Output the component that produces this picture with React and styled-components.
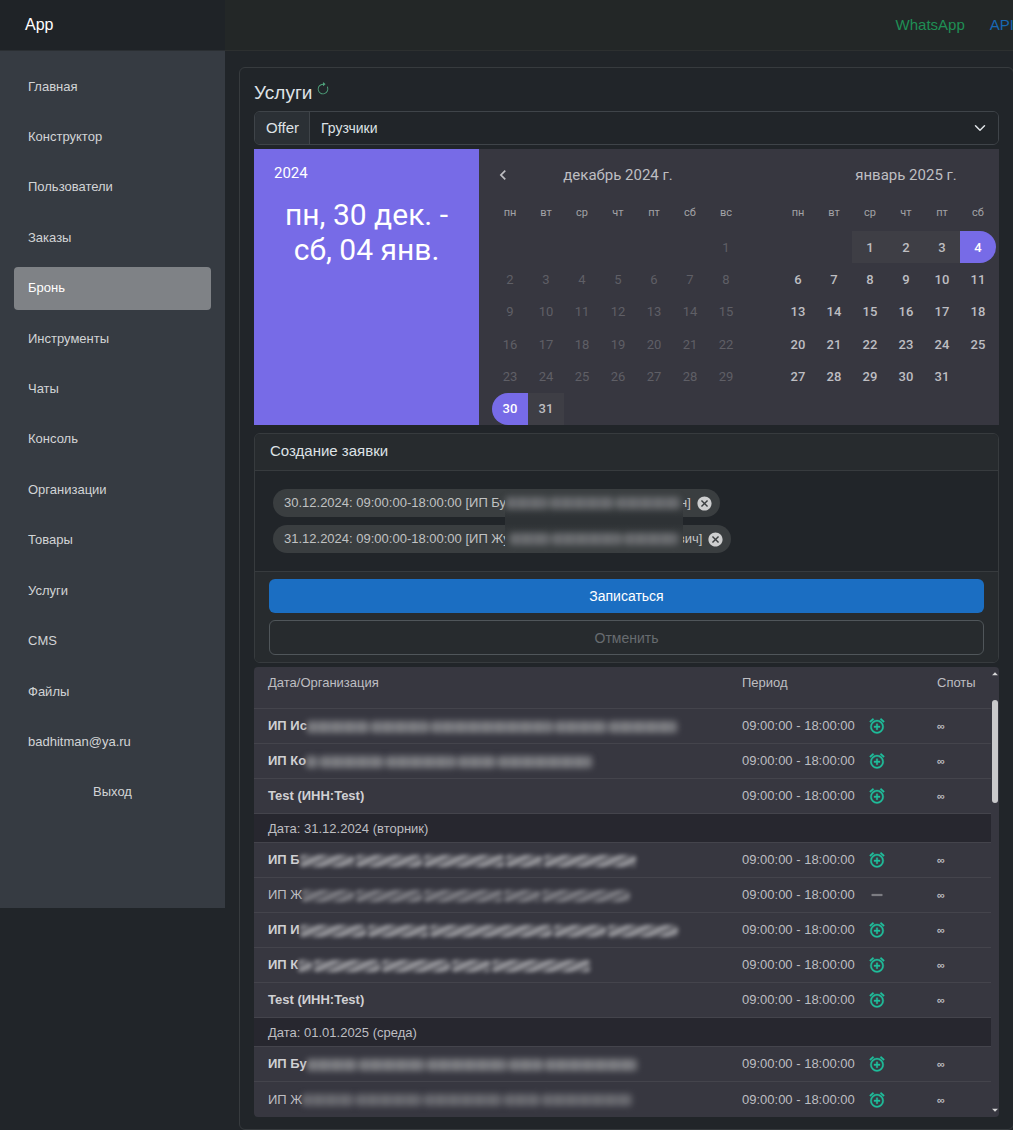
import React from "react";
import styled, { createGlobalStyle, css } from "styled-components";
import { MdOutlineAlarmAdd, MdRemove, MdCancel, MdChevronLeft, MdArrowDropUp, MdArrowDropDown } from "react-icons/md";
import { BsArrowClockwise } from "react-icons/bs";

const color = {
  page: "#212529",
  line: "#373b3e",
  surface: "#373740",
  surfaceLine: "#44444c",
  group: "#27272f",
  primary: "#776be7",
  text: "#dee2e6",
  muted: "#bebec2",
};

const GlobalStyle = createGlobalStyle`
  *, *::before, *::after { box-sizing: border-box; }
  body {
    margin: 0;
    background: ${color.page};
    color: ${color.text};
    font: 15px/22px "Liberation Sans", Arial, sans-serif;
  }
  button, select { font: inherit; color: inherit; }
`;

/* ---------- shell ---------- */

const Shell = styled.div`
  display: flex;
  align-items: flex-start;
  min-height: 100vh;
  overflow: hidden;
`;

const Sidebar = styled.aside`
  flex: 0 0 225px;
  background: #363b42;
`;

const Brand = styled.a`
  display: flex;
  align-items: center;
  height: 51px;
  padding: 0 25px;
  background: #1f2327;
  border-bottom: 1px solid #2b2f33;
  color: #fff;
  font-size: 16px;
  text-decoration: none;
`;

const NavList = styled.ul`
  display: flex;
  flex-direction: column;
  justify-content: space-between;
  min-height: 857px;
  margin: 0;
  padding: 14px 14px 94px;
  list-style: none;
`;

const navItem = css`
  display: flex;
  align-items: center;
  width: 100%;
  height: 43px;
  padding: 0 14px;
  border: 0;
  border-radius: 4px;
  background: none;
  color: #d2d4d6;
  font-size: 13px;
  text-decoration: none;
`;

const NavLink = styled.a`
  ${navItem}
  ${(p) => p.$active && css`
    background: #7f8286;
    color: #fff;
  `}
`;

const NavButton = styled.button`
  ${navItem}
  justify-content: center;
`;

const Main = styled.main`
  flex: 1;
  min-width: 0;
  margin-right: -1px;
`;

const TopBar = styled.header`
  display: flex;
  justify-content: flex-end;
  align-items: center;
  gap: 25px;
  height: 51px;
  background: #232727;
  border-bottom: 1px solid #2d3030;
`;

const TopLink = styled.a`
  color: ${(p) => p.$color};
  text-decoration: none;
`;

const ServiceCard = styled.section`
  display: flex;
  flex-direction: column;
  gap: 4px;
  margin: 16px 0 0 14px;
  padding: 14px 14px 12px;
  border: 1px solid ${color.line};
  border-radius: 6px;
`;

const TitleRow = styled.div`
  display: flex;
  align-items: flex-start;
  gap: 4px;
  height: 25px;
`;

const Title = styled.h1`
  margin: 0;
  font-size: 19px;
  font-weight: 400;
  line-height: 22px;
`;

const RefreshButton = styled.button`
  display: flex;
  padding: 0;
  border: 0;
  background: none;
  color: #4fa37c;
  font-size: 14px;
  line-height: 14px;
  svg { display: block; }
`;

/* ---------- offer picker ---------- */

const OfferGroup = styled.div`
  display: flex;
  height: 34px;
  border: 1px solid #3f4449;
  border-radius: 6px;
  overflow: hidden;
`;

const OfferLabel = styled.label`
  display: flex;
  align-items: center;
  padding: 0 10px 0 11px;
  border-right: 1px solid #3f4449;
  background: #2b3035;
`;

const SelectWrap = styled.div`
  display: grid;
  flex: 1;
  align-items: center;
  > * { grid-area: 1 / 1; }
  > svg { justify-self: end; margin-right: 12px; pointer-events: none; }
`;

const OfferSelect = styled.select`
  appearance: none;
  width: 100%;
  height: 100%;
  padding: 0 36px 0 11px;
  border: 0;
  background: ${color.page};
  font-size: 14px;
`;

/* ---------- calendar ---------- */

const Picker = styled.div`
  display: flex;
  min-height: 276px;
  background: ${color.surface};
  font-family: Roboto, "Liberation Sans", sans-serif;
  overflow: hidden;
`;

const PickerToolbar = styled.div`
  flex: 0 0 225px;
  padding: 13px 20px;
  background: ${color.primary};
  color: #fff;
`;

const PickerYear = styled.div`
  font-size: 15px;
`;

const PickerRange = styled.div`
  margin-top: 13px;
  font-size: 30px;
  line-height: 35px;
  text-align: center;
`;

const Months = styled.div`
  display: flex;
  flex: 1;
  min-width: 0;
  gap: 36px;
  padding-left: 13px;
  color: ${color.muted};
  overflow: hidden;
`;

const Month = styled.div`
  display: flex;
  flex: 0 0 252px;
  flex-direction: column;
`;

const MonthHeader = styled.div`
  display: grid;
  grid-template-columns: 22px 1fr 22px;
  align-items: center;
  height: 52px;
`;

const MonthName = styled.div`
  grid-column: 2;
  grid-row: 1;
  font-size: 15px;
  text-align: center;
`;

const PrevButton = styled.button`
  display: flex;
  justify-content: center;
  padding: 0;
  border: 0;
  background: none;
  font-size: 20px;
`;

const DayNames = styled.div`
  display: grid;
  grid-template-columns: repeat(7, 36px);
  height: 30px;
  color: #a2a2a6;
  font-size: 11px;
  line-height: 24px;
  text-align: center;
`;

const Days = styled.div`
  display: grid;
  flex: 1;
  grid-template-columns: repeat(7, 36px);
  grid-template-rows: repeat(6, 1fr);
`;

const Day = styled.button`
  grid-column: ${(p) => p.$column};
  grid-row: ${(p) => p.$row};
  padding: 1px 0 0;
  border: 0;
  background: none;
  font-size: 13px;
  font-weight: 500;
  &:disabled { color: #5f5f66; font-weight: 400; }
  ${(p) => p.$state === "between" && css`background: #3e3e45;`}
  ${(p) => p.$state === "start" && css`
    background: ${color.primary};
    border-radius: 18px 0 0 18px;
    color: #fff;
  `}
  ${(p) => p.$state === "end" && css`
    background: ${color.primary};
    border-radius: 0 18px 18px 0;
    color: #fff;
  `}
`;

/* ---------- request form ---------- */

const RequestCard = styled.form`
  margin-top: 4px;
  border: 1px solid ${color.line};
  border-radius: 6px;
  overflow: hidden;
`;

const RequestHeader = styled.h2`
  margin: 0;
  padding: 6px 15px 8px;
  background: #272b2e;
  border-bottom: 1px solid ${color.line};
  font-size: 15px;
  font-weight: 400;
  line-height: 22px;
`;

const Chips = styled.div`
  position: relative;
  display: flex;
  flex-direction: column;
  align-items: flex-start;
  gap: 8px;
  padding: 18px;
`;

const Chip = styled.span`
  display: flex;
  align-items: center;
  height: 28px;
  padding: 0 7px 0 11px;
  border-radius: 14px;
  background: #3a3e40;
  color: #c0c2c3;
  font-size: 13px;
  white-space: nowrap;
`;

const ChipClose = styled.button`
  display: flex;
  margin-left: 5px;
  padding: 0;
  border: 0;
  background: none;
  color: #cdcecf;
  font-size: 17px;
`;

const Haze = styled.div`
  position: absolute;
  top: 24px;
  bottom: 24px;
  left: 250px;
  width: 178px;
  background: linear-gradient(#3a3e40 20%, #2e3235 45%, #2e3235 55%, #3a3e40 80%);
`;

const RequestFooter = styled.div`
  display: flex;
  flex-direction: column;
  gap: 7px;
  padding: 7px 14px;
  background: #272b2e;
  border-top: 1px solid ${color.line};
`;

const Submit = styled.button`
  height: 34px;
  border: 0;
  border-radius: 6px;
  background: #1b6ec2;
  color: #fff;
  font-size: 14px;
`;

const Cancel = styled.button`
  height: 35px;
  border: 1px solid #50565a;
  border-radius: 6px;
  background: none;
  font-size: 14px;
  &:disabled { color: #676c70; }
`;

/* ---------- hidden names ---------- */

const Smudge = styled.span`
  position: relative;
  display: inline-flex;
  gap: 2px;
  height: 16px;
  padding: 2px 0;
  vertical-align: middle;
  filter: blur(${(p) => (p.$slanted ? 2 : 3)}px);
  opacity: ${(p) => (p.$strong ? 0.9 : 0.65)};
`;

const SmudgeWord = styled.span`
  border-radius: 3px;
  background: ${(p) => p.$slanted
    ? "repeating-linear-gradient(155deg, #b0b0b4 0 3px, #5c5c63 5px 8px)"
    : "repeating-linear-gradient(90deg, #87888c 0 6px, #7b7c81 9px 13px)"};
`;

function HiddenName({ words, slanted, strong = true }) {
  return (
    <Smudge aria-hidden="true" $strong={strong} $slanted={slanted}>
      {words.map((width, i) => (
        <SmudgeWord key={i} $slanted={slanted} style={{ width }} />
      ))}
    </Smudge>
  );
}

/* ---------- slots ---------- */

const SlotsPanel = styled.div`
  display: flex;
  background: ${color.surface};
  border-radius: 4px;
  overflow: hidden;
`;

const SlotsTable = styled.table`
  flex: 1;
  table-layout: fixed;
  width: 100%;
  border-collapse: separate;
  border-spacing: 0;
  color: ${color.muted};
  font-size: 13px;
  line-height: 18px;
  th, td {
    height: 35px;
    padding: 0 0 0 14px;
    border-bottom: 1px solid ${color.surfaceLine};
    text-align: left;
    white-space: nowrap;
  }
  tbody:last-child tr:last-child td { border-bottom: 0; }
  thead th {
    height: 42px;
    padding-bottom: 10px;
    font-weight: 400;
  }
`;

const GroupCell = styled.th`
  && {
    height: 29px;
    padding-top: 1px;
    background: ${color.group};
    font-weight: 400;
  }
`;

const OrgCell = styled.td`
  color: ${(p) => (p.$strong ? "#d0d0d3" : color.muted)};
  font-weight: ${(p) => (p.$strong ? 700 : 400)};
`;

const Period = styled.div`
  display: flex;
  align-items: center;
  gap: 13px;
`;

const SlotButton = styled.button`
  display: flex;
  padding: 0;
  border: 0;
  background: none;
  color: #1fbf9c;
  font-size: 18px;
  path:not([fill="none"]) { stroke: currentColor; stroke-width: 0.5px; }
  &:disabled { color: #8d8d92; }
`;

const Spots = styled.small`
  font-size: 11px;
  font-weight: 700;
`;

const Scroll = styled.div`
  display: flex;
  flex: 0 0 8px;
  flex-direction: column;
  align-items: center;
  min-width: 0;
  color: #d8d8d8;
  svg { flex: none; width: 14px; height: 14px; }
`;

const ScrollThumb = styled.div`
  width: 6px;
  height: 103px;
  margin: 19px 0 auto;
  border-radius: 3px;
  background: #c9c9cb;
`;

/* ---------- data ---------- */

const nav = ["Главная", "Конструктор", "Пользователи", "Заказы", "Бронь", "Инструменты", "Чаты", "Консоль",
  "Организации", "Товары", "Услуги", "CMS", "Файлы", "badhitman@ya.ru"];

const weekDays = ["пн", "вт", "ср", "чт", "пт", "сб", "вс"];
const range = (from, to) => Array.from({ length: to - from + 1 }, (_, i) => from + i);

const december = {
  name: "декабрь 2024 г.",
  offset: 6,
  names: weekDays,
  days: range(1, 31),
  state: (d) => (d < 30 ? "past" : d === 30 ? "start" : "between"),
};
const january = {
  name: "январь 2025 г.",
  offset: 2,
  names: weekDays.slice(0, 6),
  days: range(1, 31).filter((d) => (d + 1) % 7 !== 6),
  state: (d) => (d < 4 ? "between" : d === 4 ? "end" : "open"),
};

const time = "09:00:00 - 18:00:00";
const longName = [62, 58, 122, 52, 68];
const midName = [54, 66, 80, 36, 92];
const shortName = [14, 66, 68, 38, 98];

const groups = [
  { rows: [
    { org: "ИП Ис", words: longName },
    { org: "ИП Ко", words: [12, 64, 70, 38, 94] },
    { org: "Test (ИНН:Test)" },
  ] },
  { date: "Дата: 31.12.2024 (вторник)", rows: [
    { org: "ИП Б", words: midName, slanted: true },
    { org: "ИП Ж", words: [52, 66, 78, 36, 88], slanted: true, taken: true, light: true },
    { org: "ИП И", words: [66, 60, 122, 52, 70], slanted: true },
    { org: "ИП К", words: shortName, slanted: true },
    { org: "Test (ИНН:Test)" },
  ] },
  { date: "Дата: 01.01.2025 (среда)", rows: [
    { org: "ИП Бу", words: [50, 66, 80, 34, 92] },
    { org: "ИП Ж", words: [52, 66, 78, 36, 90], light: true },
  ] },
];

const chips = [
  { start: "30.12.2024: 09:00:00-18:00:00 [ИП Бу", words: [42, 64, 64], end: "н]" },
  { start: "31.12.2024: 09:00:00-18:00:00 [ИП Жу", words: [40, 70, 54], end: "вич]" },
];

/* ---------- parts ---------- */

function MonthView({ month, withPrev }) {
  return (
    <Month>
      <MonthHeader>
        {withPrev && <PrevButton type="button"><MdChevronLeft /></PrevButton>}
        <MonthName>{month.name}</MonthName>
      </MonthHeader>
      <DayNames>{month.names.map((n) => <span key={n}>{n}</span>)}</DayNames>
      <Days>
        {month.days.map((d) => {
          const cell = d + month.offset - 1;
          const state = month.state(d);
          return (
            <Day key={d} type="button" disabled={state === "past"} $state={state}
              $column={(cell % 7) + 1} $row={Math.floor(cell / 7) + 1}>{d}</Day>
          );
        })}
      </Days>
    </Month>
  );
}

function SlotRow({ row }) {
  return (
    <tr>
      <OrgCell $strong={!row.light}>
        {row.org}
        {row.words && <HiddenName words={row.words} slanted={row.slanted} strong={!row.light} />}
      </OrgCell>
      <td>
        <Period>
          {time}
          <SlotButton type="button" disabled={row.taken}>
            {row.taken ? <MdRemove /> : <MdOutlineAlarmAdd />}
          </SlotButton>
        </Period>
      </td>
      <td><Spots>∞</Spots></td>
    </tr>
  );
}

export default function App() {
  return (
    <>
      <GlobalStyle />
      <Shell>
        <Sidebar>
          <Brand href="#">App</Brand>
          <nav>
            <NavList>
              {nav.map((item) => (
                <li key={item}><NavLink href="#" $active={item === "Бронь"}>{item}</NavLink></li>
              ))}
              <li><NavButton type="button">Выход</NavButton></li>
            </NavList>
          </nav>
        </Sidebar>
        <Main>
          <TopBar>
            <TopLink href="#" $color="#1f8f55">WhatsApp</TopLink>
            <TopLink href="#" $color="#1768b4">API</TopLink>
          </TopBar>
          <ServiceCard>
            <TitleRow>
              <Title>Услуги</Title>
              <RefreshButton type="button"><BsArrowClockwise /></RefreshButton>
            </TitleRow>
            <OfferGroup>
              <OfferLabel htmlFor="offer">Offer</OfferLabel>
              <SelectWrap>
                <OfferSelect id="offer"><option>Грузчики</option></OfferSelect>
                <svg width="12" height="12" viewBox="0 0 16 16" fill="none" stroke="#dee2e6"
                  strokeWidth="2" strokeLinecap="round" strokeLinejoin="round">
                  <path d="m2 5 6 6 6-6" />
                </svg>
              </SelectWrap>
            </OfferGroup>
            <Picker>
              <PickerToolbar>
                <PickerYear>2024</PickerYear>
                <PickerRange>пн, 30 дек. - сб, 04 янв.</PickerRange>
              </PickerToolbar>
              <Months>
                <MonthView month={december} withPrev />
                <MonthView month={january} />
              </Months>
            </Picker>
            <RequestCard onSubmit={(e) => e.preventDefault()}>
              <RequestHeader>Создание заявки</RequestHeader>
              <Chips>
                <Haze />
                {chips.map((chip) => (
                  <Chip key={chip.start}>
                    {chip.start}
                    <HiddenName words={chip.words} strong={false} />
                    {chip.end}
                    <ChipClose type="button"><MdCancel /></ChipClose>
                  </Chip>
                ))}
              </Chips>
              <RequestFooter>
                <Submit type="submit">Записаться</Submit>
                <Cancel type="button" disabled>Отменить</Cancel>
              </RequestFooter>
            </RequestCard>
            <SlotsPanel>
              <SlotsTable>
                <colgroup>
                  <col />
                  <col style={{ width: 195 }} />
                  <col style={{ width: 68 }} />
                </colgroup>
                <thead>
                  <tr>
                    <th scope="col">Дата/Организация</th>
                    <th scope="col">Период</th>
                    <th scope="col">Споты</th>
                  </tr>
                </thead>
                {groups.map((group, g) => (
                  <tbody key={g}>
                    {group.date && <tr><GroupCell colSpan={3} scope="rowgroup">{group.date}</GroupCell></tr>}
                    {group.rows.map((row, r) => <SlotRow key={r} row={row} />)}
                  </tbody>
                ))}
              </SlotsTable>
              <Scroll aria-hidden="true">
                <MdArrowDropUp />
                <ScrollThumb />
                <MdArrowDropDown />
              </Scroll>
            </SlotsPanel>
          </ServiceCard>
        </Main>
      </Shell>
    </>
  );
}
